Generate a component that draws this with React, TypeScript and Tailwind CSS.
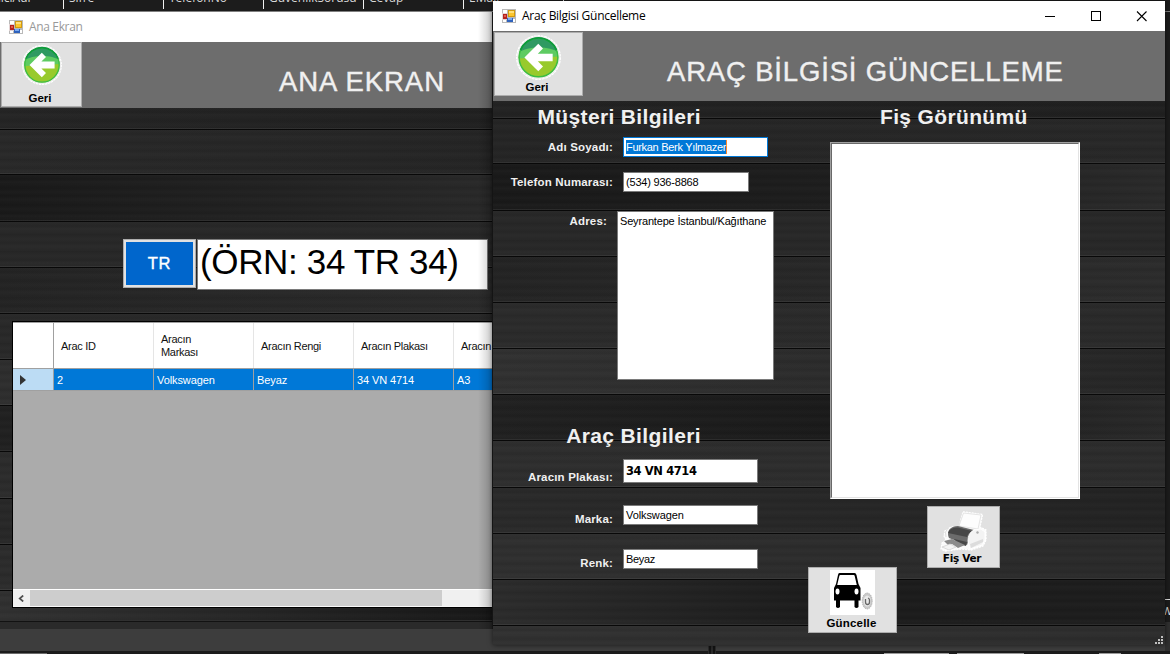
import React from 'react';

const ms = "font-['Liberation_Sans',Arial,sans-serif]";
const ui = "font-['Open_Sans','Noto_Sans',sans-serif]";

const rightPlanks = [
  'h-[18px] bg-linear-to-r from-[#222222] to-[#1f1f1f]',
  'h-[45px] bg-linear-to-r from-[#242424] to-[#272727]',
  'h-[47px] bg-linear-to-r from-[#191919] via-[#1d1d1d] to-[#292929]',
  'h-[46px] bg-linear-to-r from-[#272727] to-[#272727]',
  'h-[46px] bg-linear-to-r from-[#232323] to-[#2b2b2b]',
  'h-[46px] bg-linear-to-r from-[#2a2a2a] to-[#292929]',
  'h-[46px] bg-linear-to-r from-[#303030] via-[#2b2b2b] to-[#252525]',
  'h-[46px] bg-linear-to-r from-[#202020] via-[#1a1a1a] to-[#282828]',
  'h-[47px] bg-linear-to-r from-[#2d2d2d] to-[#2b2b2b]',
  'h-[46px] bg-linear-to-r from-[#292929] via-[#262626] to-[#222222]',
  'h-[46px] bg-linear-to-r from-[#2e2e2e] to-[#292929]',
  'h-[46px] bg-linear-to-r from-[#2b2b2b] via-[#1b1b1b] to-[#1d1d1d]',
  'h-[46px] bg-linear-to-r from-[#303030] to-[#2c2c2c]',
];

const leftPlanks = [
  'h-[22px] bg-linear-to-r from-[#242424] to-[#202020]',
  'h-[45px] bg-linear-to-r from-[#282828] to-[#242424]',
  'h-[47px] bg-linear-to-r from-[#191919] to-[#282828]',
  'h-[46px] bg-linear-to-r from-[#272727] to-[#272727]',
  'h-[46px] bg-linear-to-r from-[#232323] to-[#2a2a2a]',
  'h-[46px] bg-[#282828]',
  'h-[46px] bg-[#2d2d2d]',
  'h-[46px] bg-[#202020]',
  'h-[47px] bg-[#2b2b2b]',
  'h-[46px] bg-[#272727]',
  'h-[46px] bg-[#2b2b2b]',
  'h-[32px] bg-linear-to-r from-[#303030] via-[#252525] to-[#171717]',
];

function Planks({ rows }: { rows: string[] }) {
  return (
    <div className="absolute inset-0 overflow-hidden">
      {rows.map((row, i) => (
        <div key={i} className={`${row} border-b border-[#080808]`}>
          <div className="h-full border-b border-white/6 bg-[repeating-linear-gradient(180deg,rgba(255,255,255,0.014)_0px,rgba(0,0,0,0.03)_4px,rgba(255,255,255,0.02)_7px,rgba(0,0,0,0.04)_13px,rgba(255,255,255,0.014)_17px)]" />
        </div>
      ))}
    </div>
  );
}

function FormIcon() {
  return (
    <svg width="14" height="14" viewBox="0 0 14 14" shapeRendering="crispEdges">
      <path d="M0 0h14v14H0z" fill="#b9b9b9" />
      <path d="M1 1h4v3H1zM1 11h3v2H1zM11 10h2v3h-2z" fill="#fff" />
      <path d="M0 4h5v7H0z" fill="#e3d4d4" />
      <path d="M1 5h4v5H1z" fill="#b3221f" />
      <path d="M2 6h2v2H2z" fill="#e25a4a" />
      <path d="M6 1h7v7H6z" fill="#d19a10" />
      <path d="M7 2h5v5H7z" fill="#fcc62e" />
      <path d="M7 2h5v2H7z" fill="#ffe07a" />
      <path d="M5 9h6v4H5z" fill="#2f62bd" />
      <path d="M6 9h4v2H6z" fill="#79a9f0" />
    </svg>
  );
}

function BackIcon({ size, id }: { size: number; id: string }) {
  return (
    <svg width={size} height={size} viewBox="0 0 40 40">
      <defs>
        <clipPath id={id}>
          <circle cx="20" cy="20" r="17.6" />
        </clipPath>
      </defs>
      <circle cx="20" cy="20" r="19.400" fill="#e9e9e9" stroke="#fff" strokeWidth="1.100" strokeDasharray="2.400 .7" />
      <circle cx="20" cy="20" r="18.400" fill="#f4f4f4" />
      <g clipPath={`url(#${id})`}>
        <path d="M0 0h40v40H0z" fill="#98ca2c" />
        <path d="M0 0h40v19L22 20 0 21z" fill="#5ecb62" />
        <path d="M0 0h40v17C32 9 9 9 0 17z" fill="#2f9a62" />
      </g>
      <circle cx="20" cy="20" r="17.200" fill="none" stroke="#3cbd45" strokeWidth="1.300" />
      <path d="M4 13.500A17.200 17.200 0 0 1 36 13.500" fill="none" stroke="#0d9a3c" strokeWidth="1.600" />
      <path d="M7.500 20 19.800 7.700l4.200 4.200-4.600 4.700h13.200v6.800H19.400l4.600 4.700-4.200 4.200z" fill="#fff" />
    </svg>
  );
}

function PrinterIcon() {
  return (
    <svg width="47" height="41" viewBox="0 0 47 41">
      <path d="M23 .8 42.500 3.500 40 16l6 3v10l-3 6-12 4-9-1-9 1-8 1-4-2 1-6 4-3-2-4 1-5 6-4 8 0z" fill="#fbfbfb" stroke="#fff" strokeWidth="1.300" strokeDasharray="2 .9" />
      <path d="M8 17q-4 4-2 9" fill="none" stroke="#dcdcdc" />
      <path d="M23.500 2 41 4l-3 14-19-3z" fill="#fdfdfd" stroke="#dedede" strokeWidth=".8" />
      <path d="M9 19q3-4 9-4l16 4q-5 4-5 9l-2 6L9 27q-2-4 0-8z" fill="#6c6c6c" />
      <path d="M9 20q3-4 9-3.500l14 3.500q-4 2-5 6L8 22z" fill="#474747" />
      <path d="m14 28 13 3-1 4-9-3z" fill="#474747" />
      <path d="M28 30q0-8 6-11l7-1 4 3v8l-3 5-12 4z" fill="#f3f3f3" stroke="#fff" />
      <path d="m30 33 13-5v3l-12 6z" fill="#dcdcdc" />
      <path d="m4 30 8-2 13 6-7 3-6-4-4 1z" fill="#8b8b8b" />
      <path d="m2 36 8-3 6 3-7 3z" fill="#f4f4f4" stroke="#cfcfcf" strokeWidth=".7" />
      <circle cx="37.500" cy="21.500" r="1.200" fill="#aaa" />
    </svg>
  );
}

function CarIcon() {
  return (
    <svg width="45" height="45" viewBox="0 0 45 45">
      <path d="M0 0h45v45H0z" fill="#fff" />
      <path d="M9.500 3h15q1.500 0 2 2l2 9 2 4v12.500h-2V37q-2 2-4 0v-6.500H10V37q-2 2-4 0v-6.500H4V18l2-4 2-9q.2-2 1.500-2z" fill="#000" />
      <path d="M10.300 5h13.400q.8 0 1 1L26.800 15H7.200l2.100-9q.2-1 1-1z" fill="#fff" />
      <ellipse cx="7.500" cy="21.500" rx="2" ry="3" fill="#fff" />
      <ellipse cx="26.500" cy="21.500" rx="2" ry="3" fill="#fff" />
      <ellipse cx="37.200" cy="31" rx="5" ry="8" fill="#c9c9c9" stroke="#aaa" strokeWidth=".8" strokeDasharray="1.500 .8" />
      <ellipse cx="37.200" cy="31" rx="3.500" ry="5.500" fill="#e9e9e9" />
      <path d="M35.500 29v3q0 2.500 2 2.500t2-2.500v-2q0-1.500-1.500-2" fill="none" stroke="#666" strokeWidth="1.300" />
    </svg>
  );
}

function Field({ label, gap, labelClass, children }: { label: string; gap: string; labelClass: string; children: React.ReactNode }) {
  return (
    <div className={`flex items-start ${gap}`}>
      <div className={`flex shrink-0 justify-end whitespace-nowrap text-[11.5px] leading-[14px] font-bold tracking-[0.17px] text-[#f0f0f0] ${labelClass}`}>{label}</div>
      {children}
    </div>
  );
}

function LeftWindow() {
  return (
    <section className="absolute top-[12px] left-0 flex h-[617px] w-[492px] flex-col overflow-hidden bg-[#303030]">
      <header className={`flex h-[30px] shrink-0 items-center gap-[6px] bg-white pl-[9px] ${ui}`}>
        <FormIcon />
        <span className="text-[12px] tracking-[-0.35px] text-[#999999]">Ana Ekran</span>
      </header>
      <div className="flex h-[66px] shrink-0 bg-[#6d6d6d]">
        <button className="ml-px flex h-[65px] w-[81px] flex-col items-center border border-[#adadad] bg-[#e1e1e1] pt-[2px]">
          <BackIcon size={40} id="backMain" />
          <span className="mt-[6px] mr-[3px] text-[11.5px] leading-[14px] font-bold text-black">Geri</span>
        </button>
        <h1 className="mt-[23px] ml-[197px] text-[27.500px] leading-[34px] tracking-[0.95px] whitespace-nowrap text-[#f0f0f0] [-webkit-text-stroke:0.4px_#f0f0f0]">ANA EKRAN</h1>
      </div>
      <div className="relative h-[512px] shrink-0">
        <Planks rows={leftPlanks} />
        <div className="relative flex pt-[131px] pl-[123px]">
          <div className="flex h-[49px] w-[73px] items-center justify-center border border-[#adadad] bg-[#e1e1e1] p-[2px]">
            <div className="flex h-full w-full items-center justify-center bg-[#0066cc] text-[16.500px] tracking-[0.8px] text-white [-webkit-text-stroke:0.4px_white]">TR</div>
          </div>
          <div className="ml-px h-[51px] w-[291px] overflow-hidden border border-[#7a7a7a] bg-white pl-[2px] text-[35px] leading-[43px] tracking-[-0.35px] whitespace-nowrap text-black">(ÖRN: 34 TR 34)</div>
        </div>
        <div className="relative mt-[31px] ml-[12px] flex h-[287px] w-[490px] flex-col border border-black bg-[#ababab] text-[11px] tracking-[-0.1px] text-[#111]">
          <div className="flex h-[47px] shrink-0 border-t border-b border-t-[#a0a0a0] border-b-[#a0a0a0] bg-white leading-[13px]">
            <div className="w-[41px] shrink-0 border-r border-[#a0a0a0]" />
            {['Arac ID', 'Aracın Markası', 'Aracın Rengi', 'Aracın Plakası', 'Aracın'].map((h) => (
              <div key={h} className="flex w-[100px] shrink-0 items-center border-r border-[#e5e5e5] pt-px pl-[7px] tracking-[-0.3px]">
                <span className={h === 'Aracın Markası' ? 'w-[50px]' : 'whitespace-nowrap'}>{h}</span>
              </div>
            ))}
          </div>
          <div className="flex h-[22px] shrink-0 border-b border-[#a0a0a0] text-white">
            <div className="flex w-[41px] shrink-0 items-center border-r border-[#a0a0a0] bg-[#bcdcf4] pl-[7px]">
              <svg width="6" height="10" viewBox="0 0 6 10"><path d="M0 0v10l6-5z" fill="#333" /></svg>
            </div>
            {['2', 'Volkswagen', 'Beyaz', '34 VN 4714', 'A3'].map((c) => (
              <div key={c} className="flex w-[100px] shrink-0 items-center border-r border-[#a0a0a0] bg-[#0078d7] pt-px pl-[3px]">{c}</div>
            ))}
          </div>
          <div className="grow" />
          <div className="flex h-[18px] shrink-0 border-t border-b border-t-white border-b-[#f8f8f8] bg-[#f0f0f0]">
            <div className="flex w-[17px] items-center pl-[5px]">
              <svg width="6" height="7" viewBox="0 0 6 7"><path d="M5.200.5 1.700 3.500l3.500 3" fill="none" stroke="#505050" strokeWidth="1.700" /></svg>
            </div>
            <div className="w-[412px] bg-[#cdcdcd]" />
          </div>
        </div>
      </div>
      <div className="mt-[1px] h-px shrink-0 bg-[#121212]" />
      <div className="h-[7px] shrink-0 bg-[#2a2a2a]" />
      <div className="absolute inset-y-0 right-0 w-[14px] bg-linear-to-r from-transparent to-black/20" />
    </section>
  );
}

const inputBox = 'shrink-0 border border-[#7a7a7a] bg-white pl-[2px] text-[11px] leading-[18px] whitespace-nowrap text-black';

function RightWindow() {
  return (
    <section className="absolute top-px left-[493px] flex h-[644px] w-[672px] flex-col overflow-hidden bg-[#303030] shadow-[0_0_5px_rgba(0,0,0,0.6)]">
      <header className={`flex h-[30px] shrink-0 items-center bg-white pr-[17px] pl-[9px] ${ui}`}>
        <FormIcon />
        <span className="ml-[6px] grow text-[12px] tracking-[-0.28px] text-black">Araç Bilgisi Güncelleme</span>
        <svg width="103" height="11" viewBox="0 0 103 11" fill="none" stroke="#000">
          <path d="M0 5.500h10M46.500.5h9v9h-9z" shapeRendering="crispEdges" />
          <path d="m92 .5 9.500 9.500M101.500.5 92 10" strokeWidth="1.100" />
        </svg>
      </header>
      <div className="flex h-[70px] shrink-0 bg-[#6d6d6d]">
        <button className="mt-px ml-px flex h-[64px] w-[89px] flex-col items-center border border-[#adadad] bg-[#e1e1e1] pt-[2px]">
          <BackIcon size={45} id="backEdit" />
          <span className="mr-[3px] text-[11.5px] leading-[14px] font-bold text-black">Geri</span>
        </button>
        <h1 className="mt-[24px] ml-[84px] text-[27.500px] leading-[34px] tracking-[0.83px] whitespace-nowrap text-[#f0f0f0] [-webkit-text-stroke:0.4px_#f0f0f0]">ARAÇ BİLGİSİ GÜNCELLEME</h1>
      </div>
      <div className="relative flex h-[543px] shrink-0">
        <Planks rows={rightPlanks} />
        <div className="relative flex w-[315px] shrink-0 flex-col">
          <h2 className="mt-[4px] w-[208px] text-right text-[21px] leading-[24px] font-bold tracking-[0.35px] whitespace-nowrap text-[#f0f0f0]">Müşteri Bilgileri</h2>
          <Field label="Adı Soyadı:" gap="mt-[8px]" labelClass="w-[120px] mr-[10px] mt-[3px]">
            <div className="h-[20px] w-[145px] shrink-0 border border-[#0078d7] bg-white py-[2px] pl-[2px] text-[11px] leading-[14px] whitespace-nowrap">
              <span className="inline-block h-[14px] border-r border-[#ff8728] bg-[#0078d7] tracking-[-0.3px] text-white">Furkan Berk Yılmazer</span>
            </div>
          </Field>
          <Field label="Telefon Numarası:" gap="mt-[15px]" labelClass="w-[120px] mr-[10px] mt-[3px]">
            <div className={`h-[20px] w-[126px] tracking-[-0.2px] ${inputBox}`}>(534) 936-8868</div>
          </Field>
          <Field label="Adres:" gap="mt-[19px]" labelClass="w-[114px] mr-[10px] mt-[3px]">
            <div className={`h-[169px] w-[157px] tracking-[-0.17px] ${inputBox}`}>Seyrantepe İstanbul/Kağıthane</div>
          </Field>
          <h2 className="mt-[44px] w-[208px] text-right text-[21px] leading-[24px] font-bold tracking-[0.38px] whitespace-nowrap text-[#f0f0f0]">Araç Bilgileri</h2>
          <Field label="Aracın Plakası:" gap="mt-[11px]" labelClass="w-[120px] mr-[10px] mt-[11px]">
            <div className="h-[24px] w-[135px] shrink-0 border border-[#7a7a7a] bg-white pl-[2px] font-['DejaVu_Sans',Verdana,sans-serif] text-[11.500px] leading-[22px] font-bold tracking-[-0.4px] whitespace-nowrap text-black">34 VN 4714</div>
          </Field>
          <Field label="Marka:" gap="mt-[21px]" labelClass="w-[120px] mr-[10px] mt-[7px]">
            <div className={`h-[20px] w-[135px] tracking-[-0.1px] ${inputBox}`}>Volkswagen</div>
          </Field>
          <Field label="Renk:" gap="mt-[23px]" labelClass="w-[120px] mr-[10px] mt-[7px]">
            <div className={`h-[20px] w-[135px] tracking-[-0.3px] ${inputBox}`}>Beyaz</div>
          </Field>
        </div>
        <div className="relative flex w-[357px] flex-col">
          <h2 className="mt-[4px] ml-[72px] text-[21px] leading-[24px] font-bold tracking-[0.35px] whitespace-nowrap text-[#f0f0f0]">Fiş Görünümü</h2>
          <div className="mt-[13px] ml-[22px] h-[357px] w-[250px] border border-t-[#a0a0a0] border-r-white border-b-white border-l-[#a0a0a0] bg-white">
            <div className="h-full w-full border border-t-[#696969] border-r-[#e3e3e3] border-b-[#e3e3e3] border-l-[#696969]" />
          </div>
          <button className="mt-[7px] ml-[119px] flex h-[62px] w-[73px] flex-col items-center border border-[#adadad] bg-[#e1e1e1] pt-[4px]">
            <PrinterIcon />
            <span className="mr-[3px] font-['DejaVu_Sans',Verdana,sans-serif] text-[10.500px] leading-[13px] font-bold tracking-[-0.3px] text-black">Fiş Ver</span>
          </button>
          <button className="mt-[-1px] flex h-[66px] w-[89px] flex-col items-center border border-[#adadad] bg-[#e1e1e1] pt-[2px]">
            <CarIcon />
            <span className="mt-[1px] mr-[2px] text-[11.500px] leading-[14px] font-bold tracking-[0.2px] text-black">Güncelle</span>
          </button>
        </div>
        <svg className="absolute right-[2px] bottom-0" width="8" height="8" viewBox="0 0 8 8" fill="#bfbfbf">
          <path d="M6 0h2v2H6zM3 3h2v2H3zM6 3h2v2H6zM0 6h2v2H0zM3 6h2v2H3zM6 6h2v2H6z" />
        </svg>
      </div>
    </section>
  );
}

export default function App() {
  return (
    <main className={`relative flex h-[654px] w-[1170px] flex-col overflow-hidden bg-[#1c1c1c] ${ms}`}>
      <div className="flex h-[12px] shrink-0 overflow-hidden border-b border-[#808080] text-[12px] text-[#d8d8d8]">
        {['KullaniciAdi', 'Sifre', 'TelefonNo', 'GuvenlikSorusu', 'Cevap', 'EMail'].map((h, i) => (
          <div key={h} className={`h-[9px] shrink-0 overflow-hidden border-r border-[#f0f0f0] ${i === 0 ? 'w-[64px]' : 'w-[100px] pl-[5px]'}`}>
            <div className={`mt-[-9px] leading-[13px] whitespace-nowrap ${ui} ${i === 0 ? 'ml-[-34px]' : ''}`}>{h}</div>
          </div>
        ))}
      </div>
      <div className="h-[617px] shrink-0" />
      <div className="h-[22px] shrink-0 bg-[#3d3d3d]" />
      <div className="flex h-[3px] shrink-0 items-end bg-[#1b1b1b]">
        <div className="h-px w-[47px] bg-[#6a6a6a]" />
        <div className="ml-[837px] h-px w-[65px] bg-[#9a9a9a]" />
        <div className="ml-[8px] h-px w-[67px] bg-[#9a9a9a]" />
        <div className="ml-[75px] h-px w-[22px] bg-[#9a9a9a]" />
      </div>
      <div className="absolute top-[599px] left-[1165px] h-[24px] w-[5px] overflow-hidden border-t border-[#e0e0e0] bg-[#1c1c1c]">
        <div className="mt-[4px] ml-[-3px] text-[11px] leading-[14px] text-[#dddddd]">W</div>
      </div>
      <div className="absolute top-[622px] left-[1165px] h-[29px] w-[5px] bg-[#303030]" />
      <div className="absolute top-[646px] left-[708px] flex h-[8px] w-[8px] justify-center gap-[2px] bg-[#2b2b2b]">
        <div className="w-[2px] bg-[#141414]" />
        <div className="w-[2px] bg-[#141414]" />
      </div>
      <LeftWindow />
      <RightWindow />
    </main>
  );
}
